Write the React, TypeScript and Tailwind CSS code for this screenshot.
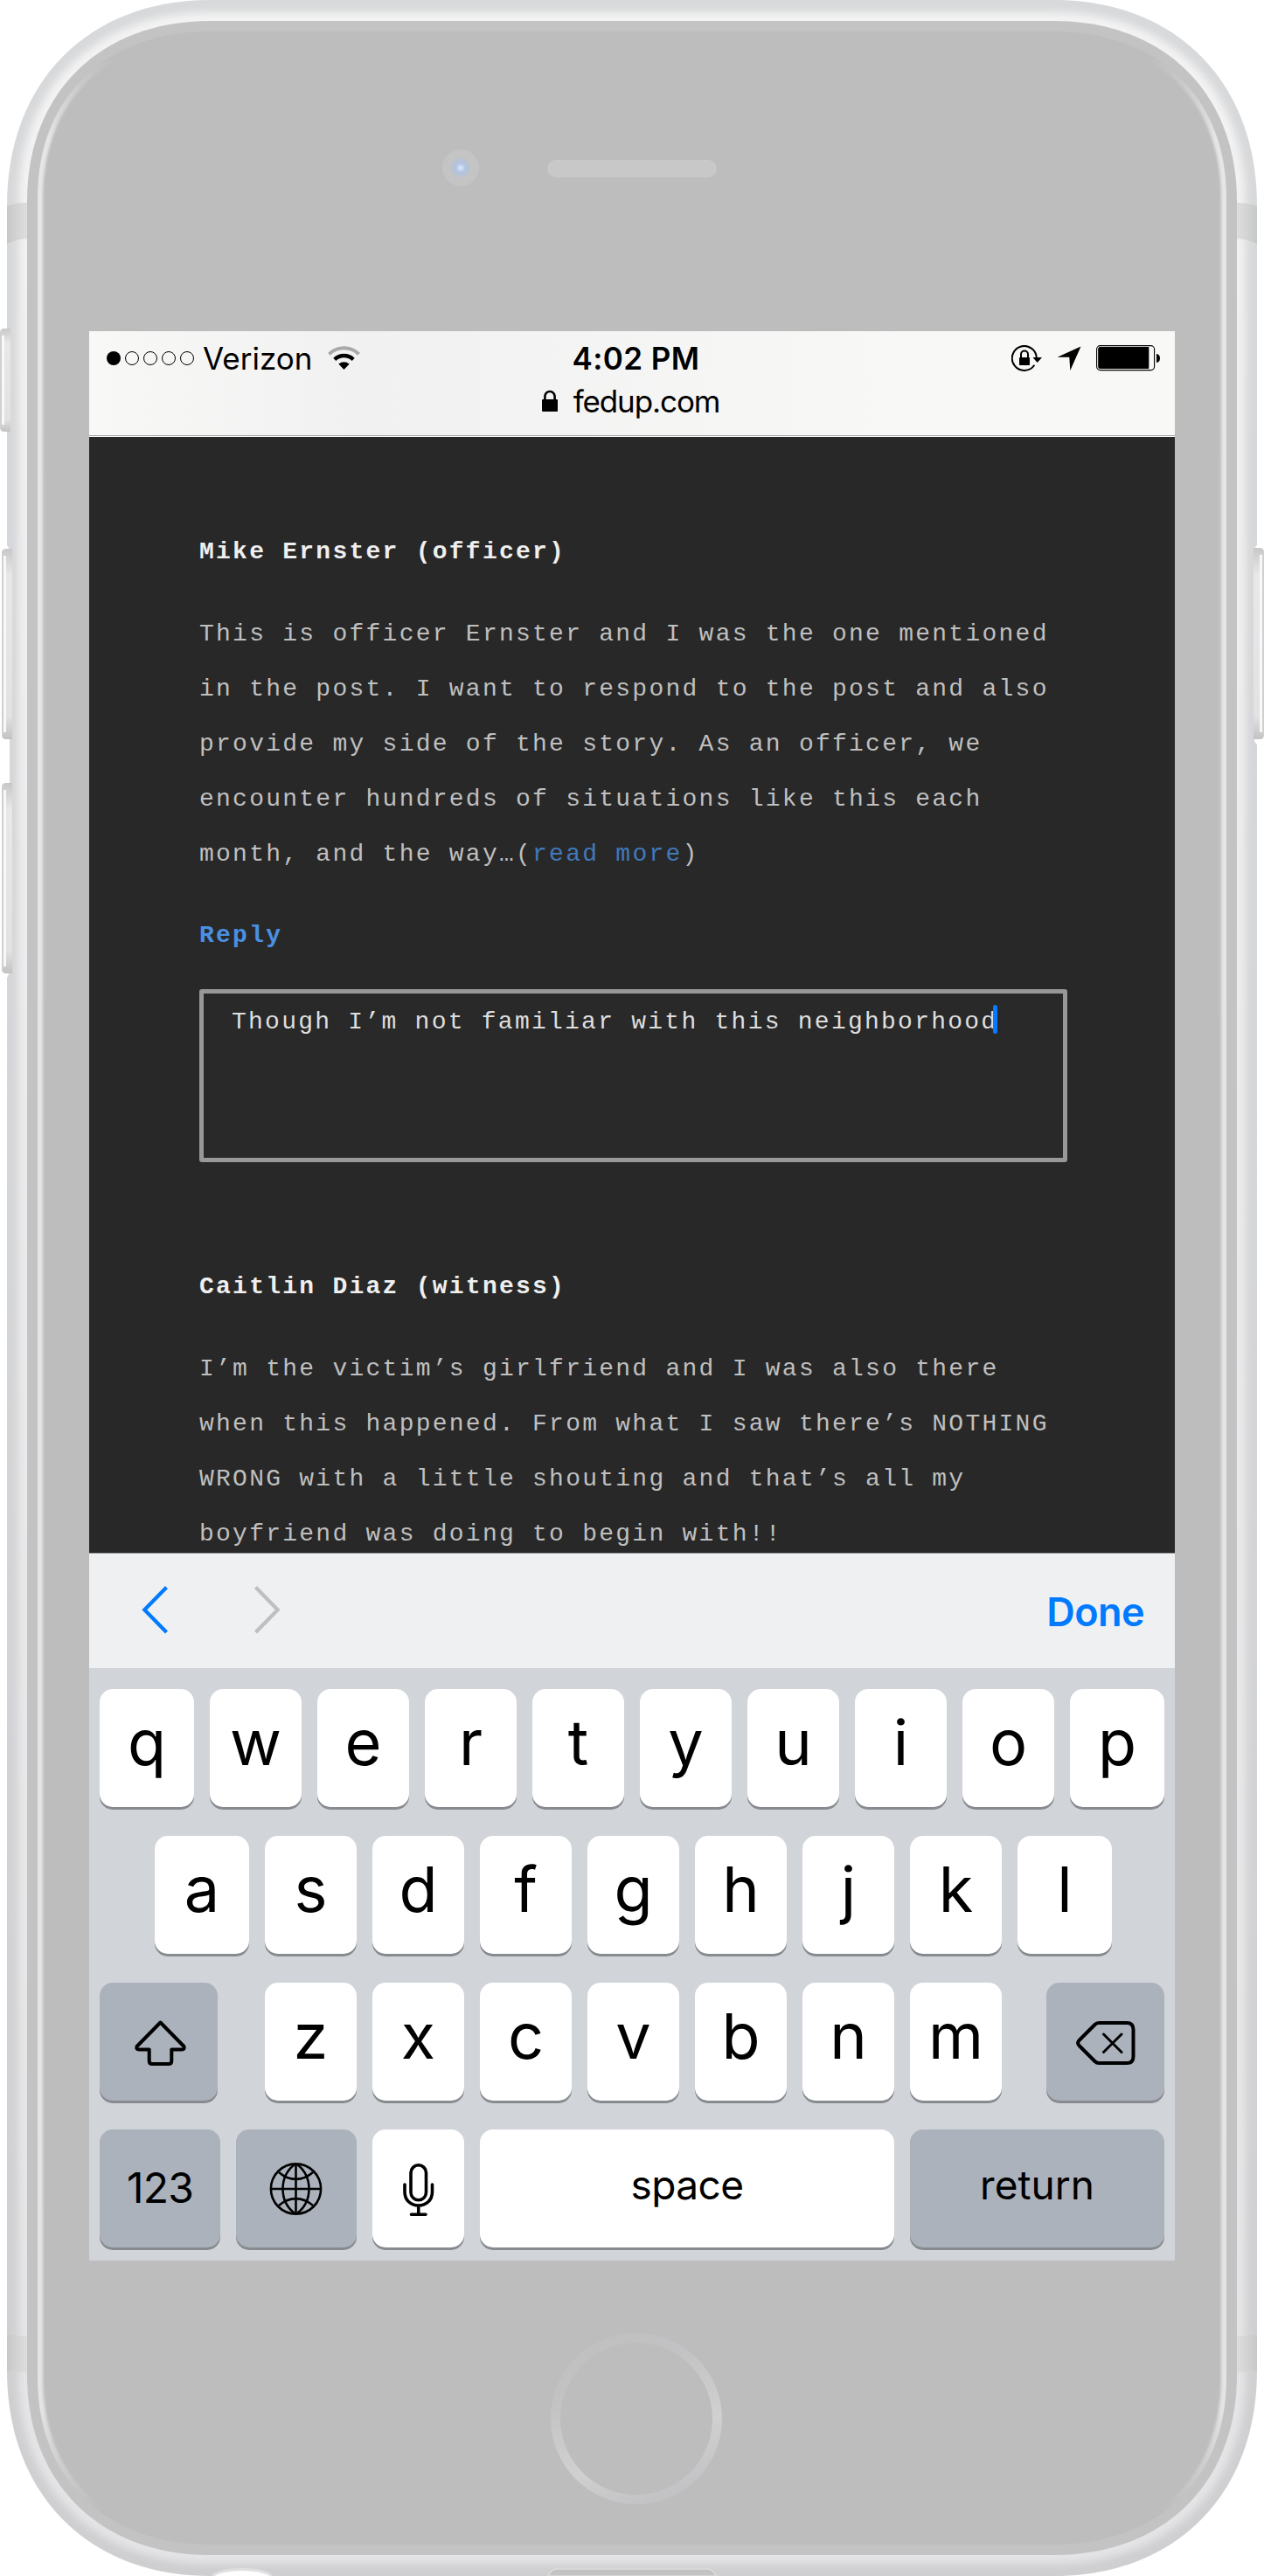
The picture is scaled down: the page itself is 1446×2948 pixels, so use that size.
import React from "react";

const BODY =
  "M8 235C8 94 101 0 240 0H1206C1345 0 1438 94 1438 235V2713C1438 2854 1345 2948 1206 2948H240C101 2948 8 2854 8 2713Z";
const FACE =
  "M31 230C31 106 115 24 240 24H1206C1331 24 1415 106 1415 230V2718C1415 2842 1331 2924 1206 2924H240C115 2924 31 2842 31 2718Z";
const GLASS =
  "M43 226C43 110 122 36 240 36H1206C1324 36 1403 110 1403 226V2722C1403 2838 1324 2912 1206 2912H240C122 2912 43 2838 43 2722Z";

function SideButton({ x, y, h, flip }: { x: number; y: number; h: number; flip?: boolean }) {
  return (
    <g transform={flip ? `translate(${x + 12} ${y}) scale(-1 1)` : `translate(${x} ${y})`}>
      <path d={`M5 0H12V${h}H5Q0 ${h} 0 ${h - 5}V5Q0 0 5 0Z`} fill="url(#button)" />
      <rect x="2" y="8" width="3" height={h - 16} fill="#f8f8f8" />
      <rect x="0" y="5" width="2" height={h - 10} fill="#d0d0d0" />
    </g>
  );
}

function PhoneShell() {
  return (
    <svg className="absolute inset-0" width="1446" height="2948" viewBox="0 0 1446 2948" fill="none">
      <defs>
        <linearGradient id="body" x1="0" y1="0" x2="0" y2="1">
          <stop offset="0" stopColor="#d8d9db" />
          <stop offset="0.5" stopColor="#d4d5d7" />
          <stop offset="1" stopColor="#cfcfd1" />
        </linearGradient>
        <linearGradient id="bevel" x1="0" y1="0" x2="0" y2="1">
          <stop offset="0" stopColor="#f3f3f3" />
          <stop offset="0.5" stopColor="#ebebec" />
          <stop offset="1" stopColor="#e4e4e6" />
        </linearGradient>
        <linearGradient id="button" x1="0" y1="0" x2="0" y2="1">
          <stop offset="0" stopColor="#c8c8c8" />
          <stop offset="0.14" stopColor="#e8e8e9" />
          <stop offset="0.88" stopColor="#e2e2e3" />
          <stop offset="1" stopColor="#c2c2c2" />
        </linearGradient>
        <linearGradient id="bandLeft" x1="0" y1="0" x2="1" y2="0">
          <stop offset="0" stopColor="#c6c8c7" />
          <stop offset="1" stopColor="#dedede" />
        </linearGradient>
        <linearGradient id="bandRight" x1="1" y1="0" x2="0" y2="0">
          <stop offset="0" stopColor="#c6c8c7" />
          <stop offset="1" stopColor="#dedede" />
        </linearGradient>
        <linearGradient id="sheen" x1="0" y1="0" x2="0" y2="2948" gradientUnits="userSpaceOnUse">
          <stop offset="0.022" stopColor="#e6e6e6" stopOpacity="0" />
          <stop offset="0.055" stopColor="#e6e6e6" />
          <stop offset="0.935" stopColor="#e4e4e4" />
          <stop offset="0.975" stopColor="#e4e4e4" stopOpacity="0" />
        </linearGradient>
        <linearGradient id="home" x1="0.2" y1="0" x2="0.6" y2="1">
          <stop offset="0" stopColor="#c0c0c1" />
          <stop offset="0.25" stopColor="#c2c2c4" />
          <stop offset="0.7" stopColor="#d0d0d0" />
          <stop offset="1" stopColor="#c3c3c6" />
        </linearGradient>
        <radialGradient id="lens">
          <stop offset="0" stopColor="#dcebff" />
          <stop offset="0.5" stopColor="#b1c3e0" />
          <stop offset="1" stopColor="#bcc3ce" />
        </radialGradient>
        <filter id="soft6" x="-5%" y="-5%" width="110%" height="110%" colorInterpolationFilters="sRGB">
          <feGaussianBlur stdDeviation="5" />
        </filter>
        <filter id="soft2" x="-5%" y="-5%" width="110%" height="110%" colorInterpolationFilters="sRGB">
          <feGaussianBlur stdDeviation="1.6" />
        </filter>
        <clipPath id="bodyClip">
          <path d={BODY} />
        </clipPath>
        <clipPath id="glassClip">
          <path d={GLASS} />
        </clipPath>
      </defs>
      <path d={BODY} fill="url(#body)" />
      <g clipPath="url(#bodyClip)">
        <path d={FACE} stroke="url(#bevel)" strokeWidth="20" filter="url(#soft6)" />
        <path d="M8 236Q18 232 31 232V273Q18 274 8 279Z" fill="url(#bandLeft)" />
        <path d="M1438 236Q1428 232 1415 232V273Q1428 274 1438 279Z" fill="url(#bandRight)" />
        <path d="M8 2672L31 2674V2715L8 2713Z" fill="url(#bandLeft)" />
        <path d="M1438 2672L1415 2674V2715L1438 2713Z" fill="url(#bandRight)" />
      </g>
      <path d="M7 622L11 629V1113L7 1121Z" fill="#fff" />
      <path d="M1439 622L1435 628V848L1439 854Z" fill="#fff" />
      <path d={FACE} fill="#c3c3c3" />
      <path d={GLASS} fill="#bdbdbd" />
      <g clipPath="url(#glassClip)">
        <path d={GLASS} stroke="url(#sheen)" strokeWidth="12" filter="url(#soft2)" />
      </g>
      <SideButton x={0} y={376} h={118} />
      <SideButton x={2} y={628} h={218} />
      <SideButton x={2} y={896} h={218} />
      <SideButton x={1434} y={627} h={219} flip />
      <circle cx="527" cy="192" r="21" fill="#c4c4c4" />
      <circle cx="527" cy="192" r="11" fill="url(#lens)" />
      <rect x="626" y="183" width="194" height="20" rx="10" fill="#c8c8c8" />
      <circle cx="728" cy="2768" r="92.5" stroke="url(#home)" strokeWidth="11" />
      <ellipse cx="277" cy="2950" rx="34" ry="9.5" fill="#fff" stroke="#e0e0e2" strokeWidth="3" />
      <path d="M627 2948L630 2943Q632 2940 638 2940H808Q814 2940 816 2943L820 2948Z" fill="#c3c3c3" stroke="#dcdcdd" strokeWidth="1.5" />
    </svg>
  );
}

function StatusBar() {
  return (
    <header className="h-[121px] border-b border-b-white bg-linear-to-r from-[#f8f8f7] via-[#f1f1f1] via-25% to-[#f8f8f7] to-75% text-black shadow-[inset_0_-1px_0_#a9a9a9]">
      <div className="grid h-[60px] grid-cols-[1fr_auto_1fr] items-center">
        <div className="flex items-center pl-5">
          <svg width="102" height="18" viewBox="0 0 102 18" fill="none" stroke="#000" strokeWidth="1">
            <circle cx="8" cy="9" r="8" fill="#000" stroke="none" />
            <circle cx="29" cy="9" r="7.5" />
            <circle cx="50" cy="9" r="7.5" />
            <circle cx="71" cy="9" r="7.5" />
            <circle cx="92" cy="9" r="7.5" />
          </svg>
          <span className="mt-px ml-2 text-[35px] leading-[60px]">Verizon</span>
          <svg className="ml-[18px]" width="37" height="28" viewBox="0 0 37 28" fill="none">
            <path d="M1.4 9.2A24.5 24.5 0 0 1 35.6 9.2" stroke="#a9a9a9" strokeWidth="4" />
            <path d="M7.8 15.3A15.5 15.5 0 0 1 29.2 15.3" stroke="#000" strokeWidth="4.4" />
            <path d="M12.3 20.6Q18.5 16 24.7 20.6L18.5 27Z" fill="#000" />
          </svg>
        </div>
        <span className="mt-px pl-[9px] text-[35px] leading-[60px] font-semibold tracking-[0.4px]">4:02 PM</span>
        <div className="flex items-center justify-end pr-[17px]">
          <svg width="36" height="30" viewBox="0 0 36 30" fill="none" stroke="#000">
            <path d="M28.8 15A14 14 0 1 0 26.4 22.8" strokeWidth="2" />
            <path d="M24.5 14H35L29.7 20Z" fill="#000" stroke="none" />
            <rect x="9" y="14" width="12" height="9" rx="0.8" fill="#000" stroke="none" />
            <path d="M11 14.5V10.5A4 4 0 0 1 19 10.5V14.5" strokeWidth="2" />
          </svg>
          <svg className="ml-[16px]" width="28" height="28" viewBox="0 0 28 28">
            <path d="M27.5 0.5L0.5 12.7H14.3L15.3 28Z" />
          </svg>
          <svg className="ml-[17px]" width="73" height="30" viewBox="0 0 73 30" fill="none">
            <rect x="0.6" y="0.6" width="66" height="28" rx="4" stroke="#000" strokeWidth="1.1" />
            <rect x="2.2" y="2" width="58" height="25" rx="2.5" fill="#000" />
            <rect x="57" y="2" width="3.2" height="25" fill="#000" />
            <path d="M69 10Q73 10.5 73 15T69 20Z" fill="#000" />
          </svg>
        </div>
      </div>
      <div className="flex items-start justify-center pr-[3px]">
        <svg className="mt-[7px]" width="18" height="26" viewBox="0 0 18 26" fill="none">
          <rect x="0" y="11" width="18" height="14" rx="1" fill="#000" />
          <path d="M3.4 12V7.6A5.6 5.6 0 0 1 14.6 7.6V12" stroke="#000" strokeWidth="2.6" />
        </svg>
        <span className="ml-[18px] text-[35px] leading-[40px] tracking-[-1.1px]">fedup.com</span>
      </div>
    </header>
  );
}

function Paragraph({ lines, children }: { lines: string[]; children?: React.ReactNode }) {
  return (
    <p className="mt-[31px] text-[#bfbfbf]">
      {lines.map((line, i) => (
        <span key={line} className="block whitespace-pre">
          {line}
          {i === lines.length - 1 && children}
        </span>
      ))}
    </p>
  );
}

function Thread() {
  return (
    <main className="h-[1277px] overflow-hidden bg-[#282828] pt-[100px] pr-[123px] pl-[126px] font-['Liberation_Mono',monospace] text-[28px] leading-[63px] tracking-[2.25px]">
      <h2 className="font-bold text-[#efefef]">Mike Ernster (officer)</h2>
      <Paragraph
        lines={[
          "This is officer Ernster and I was the one mentioned",
          "in the post. I want to respond to the post and also",
          "provide my side of the story. As an officer, we",
          "encounter hundreds of situations like this each",
          "month, and the way…(",
        ]}
      >
        <a className="text-[#4279bb]">read more</a>)
      </Paragraph>
      <div className="mt-[30px] font-bold text-[#4a90e2]">Reply</div>
      <div className="mt-[30px] flex h-[198px] items-start rounded-[3px] border-[5px] border-[#989898] bg-[#292929] pt-px pl-[32px] text-[#dedede]">
        <span className="whitespace-pre">Though I’m not familiar with this neighborhood</span>
        <span className="mt-[12px] -ml-[5px] h-[33px] w-[5px] shrink-0 rounded-sm bg-[#0a78ff]" />
      </div>
      <h2 className="mt-[111px] font-bold text-[#efefef]">Caitlin Diaz (witness)</h2>
      <Paragraph
        lines={[
          "I’m the victim’s girlfriend and I was also there",
          "when this happened. From what I saw there’s NOTHING",
          "WRONG with a little shouting and that’s all my",
          "boyfriend was doing to begin with!!",
        ]}
      />
    </main>
  );
}

function Toolbar() {
  return (
    <div className="flex h-[132px] items-start border-t border-[#98999b] bg-[#eff0f2] pl-[60px] pr-[35px]">
      <svg className="mt-[37px]" width="31" height="55" viewBox="0 0 31 55" fill="none">
        <path d="M28.5 1.5L3.3 27.3L28.5 53" stroke="#007aff" strokeWidth="4.2" />
      </svg>
      <svg className="mt-[37px] ml-[97px]" width="31" height="55" viewBox="0 0 31 55" fill="none">
        <path d="M2.5 1.5L27.7 27.3L2.5 53" stroke="#bfbfbf" strokeWidth="4.2" />
      </svg>
      <span className="ml-auto text-[45px] leading-[134px] font-semibold tracking-[-0.6px] text-[#007aff]">Done</span>
    </div>
  );
}

function Key({ className, children }: { className: string; children: React.ReactNode }) {
  return (
    <button
      className={`block h-[135px] shrink-0 rounded-[15px] text-center text-black shadow-[0_3px_0_#878a8e] ${className}`}
    >
      {children}
    </button>
  );
}

function Letters({ row, wideEnds }: { row: string; wideEnds?: boolean }) {
  return (
    <>
      {row.split("").map((c, i) => (
        <Key
          key={c}
          className={
            wideEnds && (i === 0 || i === row.length - 1)
              ? "w-[108px] bg-white text-[72px] leading-[122px]"
              : "w-[105px] bg-white text-[72px] leading-[122px]"
          }
        >
          <span className="block h-[135px]">{c}</span>
        </Key>
      ))}
    </>
  );
}

function Keyboard() {
  return (
    <div className="flex h-[678px] flex-col gap-[33px] bg-[#d1d4d9] px-3 pt-6">
      <div className="flex gap-[18px]">
        <Letters row="qwertyuiop" wideEnds />
      </div>
      <div className="flex gap-[18px] pl-[63px]">
        <Letters row="asdfghjkl" wideEnds />
      </div>
      <div className="flex gap-[18px]">
        <Key className="mr-9 w-[135px] bg-[#abb2bc]">
          <svg width="135" height="135" viewBox="0 0 135 135" fill="none" stroke="#000" strokeWidth="4" strokeLinejoin="round">
            <path d="M69.5 45.5L96.500 73Q97.500 76.500 94 76.500H82.300V89.500Q82.300 93 78.800 93H60.200Q56.700 93 56.700 89.500V76.500H45Q41.500 76.500 42.500 73Z" />
          </svg>
        </Key>
        <Letters row="zxcvbnm" />
        <Key className="ml-[33px] w-[135px] bg-[#abb2bc]">
          <svg width="135" height="135" viewBox="0 0 135 135" fill="none" stroke="#000" strokeLinecap="round" strokeLinejoin="round">
            <path d="M60 46H92Q99.500 46 99.500 53.500V84.500Q99.500 92 92 92H60Q57.500 92 55.500 90L37.500 72Q34.800 69 37.500 66L55.500 48Q57.500 46 60 46Z" strokeWidth="4" />
            <path d="M65.500 59L86 79.500M86 59L65.500 79.500" strokeWidth="3" />
          </svg>
        </Key>
      </div>
      <div className="flex gap-[18px]">
        <Key className="w-[138px] bg-[#abb2bc] text-[48px] leading-[134px] tracking-[-0.8px]">
          <span className="block h-[135px]">123</span>
        </Key>
        <Key className="w-[138px] bg-[#abb2bc]">
          <svg width="138" height="135" viewBox="0 0 138 135" fill="none" stroke="#000" strokeWidth="2.600">
            <circle cx="68.500" cy="68" r="28.600" />
            <path d="M68.500 39V97M39.500 68H97.500" />
            <path d="M67 40C49 54 49 82 67 96M70 40C88 54 88 82 70 96" />
            <path d="M49 49C61 59.500 76 59.500 88 49M49 87C61 76.500 76 76.500 88 87" />
          </svg>
        </Key>
        <Key className="w-[105px] bg-white">
          <svg width="105" height="135" viewBox="0 0 105 135" fill="none" stroke="#000" strokeWidth="3.600" strokeLinecap="round">
            <rect x="44" y="40.800" width="17.500" height="40" rx="8.750" />
            <path d="M37 63V71.500C37 81 44 87 52.750 87S68.500 81 68.500 71.500V63M52.750 88V97M44.500 97.300H61" />
          </svg>
        </Key>
        <Key className="w-[474px] bg-white text-[46px] leading-[126px] tracking-[-0.6px]">
          <span className="block h-[135px]">space</span>
        </Key>
        <Key className="w-[291px] bg-[#abb2bc] text-[46px] leading-[126px]">
          <span className="block h-[135px]">return</span>
        </Key>
      </div>
    </div>
  );
}

export default function App() {
  return (
    <div className="relative h-[2948px] w-[1446px] overflow-hidden bg-white pt-[379px] pl-[102px] font-['Inter',sans-serif]">
      <PhoneShell />
      <div className="relative w-[1242px] overflow-hidden">
        <StatusBar />
        <Thread />
        <Toolbar />
        <Keyboard />
      </div>
    </div>
  );
}
